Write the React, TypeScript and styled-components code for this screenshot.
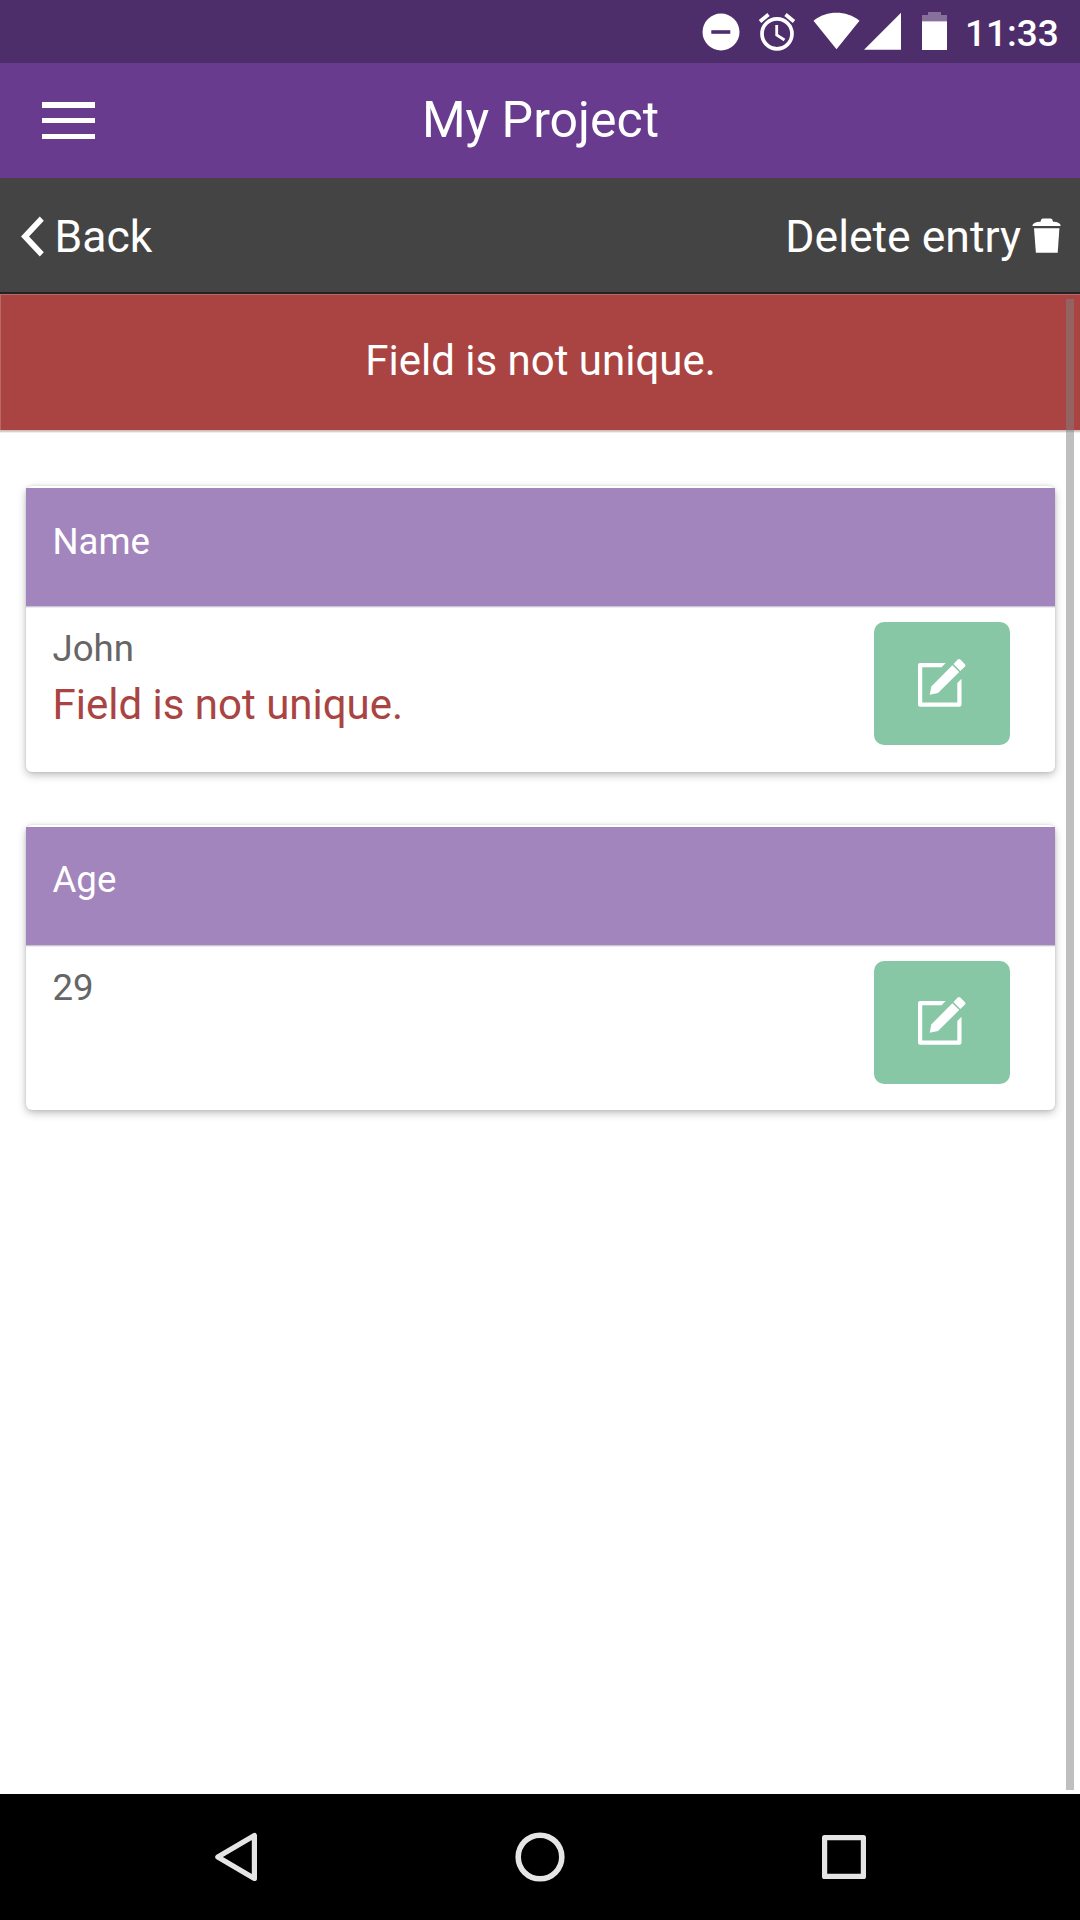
import React from 'react';
import styled, { createGlobalStyle } from 'styled-components';

const GlobalStyle = createGlobalStyle`
  * { box-sizing: border-box; }
  body { margin: 0; background: #fff; font-family: Roboto, "Noto Sans", sans-serif; }
  svg { display: block; flex: none; }
`;

const Screen = styled.div`
  width: 1080px;
  height: 1920px;
  display: flex;
  flex-direction: column;
  overflow: hidden;
`;

const StatusBar = styled.div`
  height: 63px;
  flex: none;
  display: flex;
  justify-content: flex-end;
  padding: 12px 22px 0 0;
  background: #4e2d6b;
  color: #fff;
`;

const StatusIcon = styled.svg<{ $gap: number }>`
  height: 40px;
  margin-right: ${({ $gap }) => $gap}px;
`;

const Clock = styled.span`
  padding-top: 1px;
  font-size: 37px;
  font-weight: 500;
  line-height: 42px;
  width: 93px;
  white-space: nowrap;
`;

const Header = styled.header`
  height: 115px;
  flex: none;
  display: grid;
  grid-template-columns: 140px 1fr 140px;
  align-items: center;
  background: #683b8f;
  color: #fff;
`;

const MenuButton = styled.button`
  width: 53px;
  height: 37px;
  margin-left: 42px;
  padding: 0;
  border: 0;
  background: none;
  display: flex;
  flex-direction: column;
  justify-content: space-between;
`;

const MenuLine = styled.span`
  height: 5.5px;
  background: #fff;
`;

const Title = styled.h1`
  margin: 0;
  padding: 0 0 2px 1px;
  text-align: center;
  font-size: 50px;
  line-height: 60px;
  font-weight: 400;
`;

const Toolbar = styled.nav`
  height: 116px;
  flex: none;
  display: flex;
  justify-content: space-between;
  align-items: center;
  padding: 2px 19px 0 21px;
  background: #444;
  border-bottom: 2px solid #222;
`;

const ToolbarAction = styled.button<{ $gap: number }>`
  display: flex;
  align-items: center;
  gap: ${({ $gap }) => $gap}px;
  padding: 0;
  border: 0;
  background: none;
  color: #fff;
  font: 400 44.5px/54px Roboto, sans-serif;
`;

const ActionLabel = styled.span`
  padding-top: 2px;
`;

const Content = styled.main`
  flex: 1;
  position: relative;
  background: #fff;
`;

const Banner = styled.div`
  height: 136px;
  padding-bottom: 3px;
  display: flex;
  align-items: center;
  justify-content: center;
  background: #a94442;
  border-top: 1px solid #b96967;
  border-left: 1px solid #b96967;
  box-shadow: 0 1px 0 #d3bcbc, 0 2px 0 #d9cfcf, 0 3px 0 #f3eeee;
  color: #fff;
  font-size: 42px;
  line-height: 50px;
`;

const CardList = styled.div`
  display: flex;
  flex-direction: column;
  gap: 53px;
  padding: 56px 25px 0 26px;
`;

const Card = styled.section`
  height: 285.5px;
  padding-top: 2.3px;
  border-radius: 6px;
  background: #fff;
  box-shadow: 0 3px 8px rgba(0, 0, 0, 0.26), 0 0 3px rgba(0, 0, 0, 0.12);
`;

const CardHeader = styled.div`
  height: 118px;
  padding: 31.6px 27px 0 26.5px;
  background: #a385bd;
  box-shadow: 0 1px 0 #cbc3d3, 0 2px 0 #ececee;
  color: #fff;
  font-size: 36.6px;
  line-height: 44px;
`;

const CardBody = styled.div`
  display: flex;
  justify-content: space-between;
  padding: 16px 45px 0 26.5px;
`;

const Value = styled.div`
  padding-top: 5px;
  font-size: 36.6px;
  line-height: 44px;
  color: #666;
`;

const FieldError = styled.div`
  padding-top: 9px;
  font-size: 42px;
  line-height: 50px;
  color: #a94442;
`;

const EditButton = styled.button`
  width: 136px;
  height: 123px;
  padding: 0 0 2px;
  border: 0;
  border-radius: 10px;
  background: #88c7a5;
  display: flex;
  align-items: center;
  justify-content: center;
`;

const Scrollbar = styled.div`
  position: absolute;
  top: 5px;
  right: 6px;
  bottom: 4px;
  width: 8px;
  background: rgba(128, 128, 128, 0.5);
`;

const NavBar = styled.footer`
  height: 126px;
  flex: none;
  display: flex;
  align-items: center;
  justify-content: space-between;
  padding: 0 211px;
  background: #000;
`;

const EditIcon = () => (
  <svg width="48" height="50" viewBox="0 0 48 50" fill="#fff">
    <path d="M2 5H27.7L23.5 9.3H4.2V44.4H39.3V25L43.5 20.8V46.7Q43.5 48.7 41.5 48.7H2Q0 48.7 0 46.7V7Q0 5 2 5Z" />
    <path d="M39.7 1.6Q41 .3 42.3 1.6L47 6.2Q48 7.3 47 8.4L42.3 12.9L35.5 6.1Z" />
    <path d="M34.4 7.2L41.2 14L20 35.1L11.7 36.8L13.3 28.4Z" />
  </svg>
);

const fields = [
  { label: 'Name', value: 'John', error: 'Field is not unique.' },
  { label: 'Age', value: '29' },
];

export default function App() {
  return (
    <Screen>
      <GlobalStyle />
      <StatusBar>
        <StatusIcon $gap={18} width="38" viewBox="0 0 38 40">
          <circle cx="19" cy="20" r="18.5" fill="#fff" />
          <path d="M9.3 20H28.3" stroke="#4e2d6b" strokeWidth="3.6" />
        </StatusIcon>
        <StatusIcon $gap={17} width="38" viewBox="0 0 38 40" fill="none" stroke="#fff">
          <circle cx="19" cy="21.8" r="15" strokeWidth="3.7" />
          <path d="M18.7 13V23L26.5 28" strokeWidth="2.8" />
          <path d="M2 9.5L10.5 2.5M27.5 2.5L36 9.5" strokeWidth="3.8" />
        </StatusIcon>
        <StatusIcon $gap={4} width="47" viewBox="0 0 47 40">
          <path d="M.5 8.7C14-1.8 33-1.8 46.5 8.7L23.5 37.3Z" fill="#fff" />
        </StatusIcon>
        <StatusIcon $gap={21} width="37" viewBox="0 0 37 40">
          <path d="M37 .7V37.7H0Z" fill="#fff" />
        </StatusIcon>
        <StatusIcon $gap={18} width="25" viewBox="0 0 25 40">
          <path d="M0 9.5V3H6V0H19V3H25V9.5Z" fill="#87709b" />
          <path d="M0 9.3H25V38H0Z" fill="#fff" />
        </StatusIcon>
        <Clock>11:33</Clock>
      </StatusBar>
      <Header>
        <MenuButton aria-label="Menu">
          <MenuLine />
          <MenuLine />
          <MenuLine />
        </MenuButton>
        <Title>My Project</Title>
      </Header>
      <Toolbar>
        <ToolbarAction $gap={10.5}>
          <svg width="23" height="41" viewBox="0 0 23 41">
            <path d="M18.8 .5L22.8 4.7L8 20.4L22.8 36.2L18.8 40.5L0 20.4Z" fill="#fff" />
          </svg>
          <ActionLabel>Back</ActionLabel>
        </ToolbarAction>
        <ToolbarAction $gap={11}>
          <ActionLabel>Delete entry</ActionLabel>
          <svg width="29" height="36" viewBox="0 0 29 36" fill="#fff">
            <path d="M8.5 3.8Q9 .4 11 .4H18.5Q20.5 .4 21 3.8Q28.7 4 28.7 8H.4Q.4 4 8.5 3.8Z" />
            <path d="M2 10.3H27.4L25.7 34.7H3.9Z" />
          </svg>
        </ToolbarAction>
      </Toolbar>
      <Content>
        <Banner>Field is not unique.</Banner>
        <CardList>
          {fields.map((field) => (
            <Card key={field.label}>
              <CardHeader>{field.label}</CardHeader>
              <CardBody>
                <div>
                  <Value>{field.value}</Value>
                  {field.error && <FieldError>{field.error}</FieldError>}
                </div>
                <EditButton aria-label={`Edit ${field.label}`}>
                  <EditIcon />
                </EditButton>
              </CardBody>
            </Card>
          ))}
        </CardList>
        <Scrollbar />
      </Content>
      <NavBar>
        <svg width="50" height="52" viewBox="0 0 50 52" fill="none" stroke="#e5e5e5" strokeWidth="5.2" strokeLinejoin="round">
          <path d="M43.4 4.5V47.5L6.8 26Z" />
        </svg>
        <svg width="52" height="52" viewBox="0 0 52 52" fill="none" stroke="#e5e5e5" strokeWidth="5.6">
          <circle cx="26" cy="26" r="21.8" />
        </svg>
        <svg width="50" height="52" viewBox="0 0 50 52" fill="none" stroke="#e5e5e5" strokeWidth="5.2" strokeLinejoin="round">
          <rect x="5.6" y="6.6" width="38.8" height="38.8" />
        </svg>
      </NavBar>
    </Screen>
  );
}
